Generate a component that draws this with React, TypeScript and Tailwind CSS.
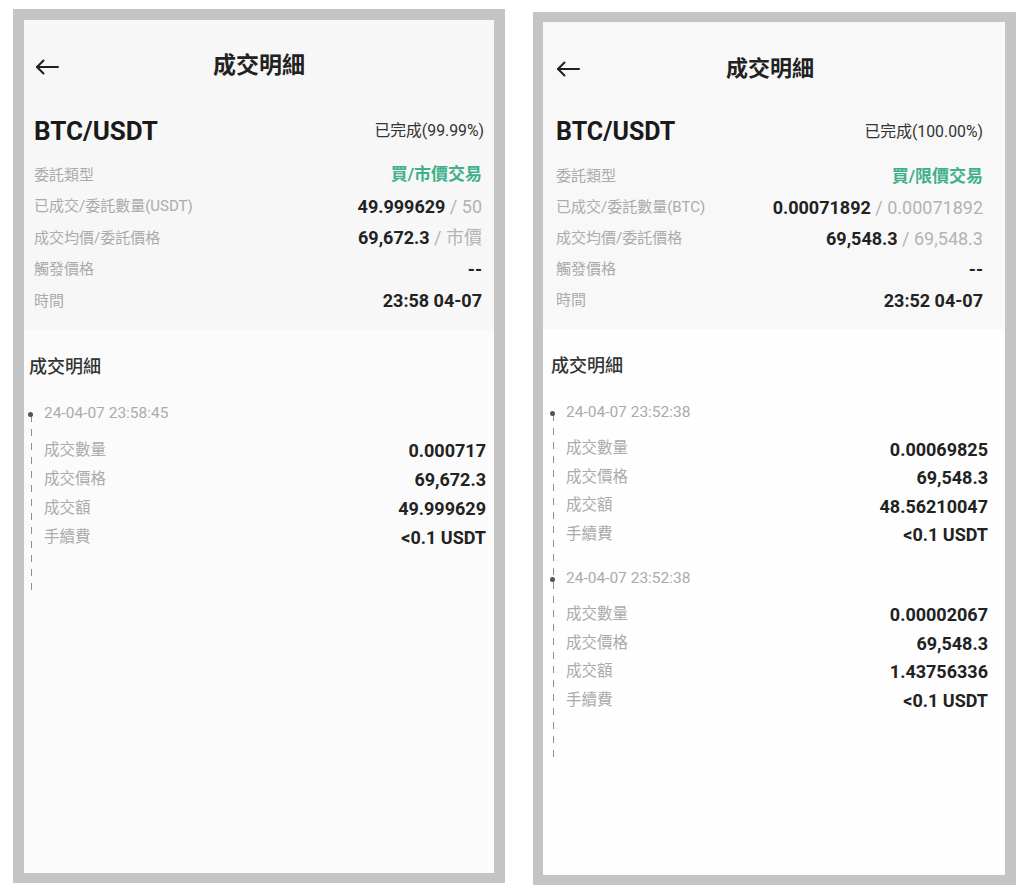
import React from "react";

type InfoRow = { label: string; main?: string; sub?: string; green?: boolean };
type Trade = { ts: string; rows: [string, string][] };

type PanelProps = {
  outer: string;
  inner: string;
  top: string;
  header: string;
  arrowPad: string;
  titleCls: string;
  pairRow: string;
  pairCls: string;
  status: string;
  infoWrap: string;
  infoRow: string;
  rows: InfoRow[];
  sectionCls: string;
  tlWrap: string;
  dotLeft: string;
  lineCls: string;
  tsRows: string[];
  detailFirst: string;
  detailRow: string;
  trades: Trade[];
};

function Arrow() {
  return (
    <svg width="24" height="16" viewBox="0 0 24 16" fill="none">
      <path d="M2 8H23" stroke="#1f1f1f" strokeWidth="2" strokeLinecap="round" />
      <path d="M8.5 1.5L2 8l6.5 6.5" stroke="#1f1f1f" strokeWidth="2" strokeLinecap="round" strokeLinejoin="round" />
    </svg>
  );
}

function Panel(p: PanelProps) {
  return (
    <div className={p.outer}>
      <div className={p.inner}>
        <div className={p.top}>
          <div className={p.header}>
            <div className={p.arrowPad}>
              <Arrow />
            </div>
            <div className={p.titleCls}>成交明細</div>
            <div />
          </div>
          <div className={p.pairRow}>
            <div className={p.pairCls}>BTC/USDT</div>
            <div className="text-[15.8px] text-[#333]">{p.status}</div>
          </div>
          <div className={p.infoWrap}>
            {p.rows.map((r) => (
              <div key={r.label} className={p.infoRow}>
                <div className="text-[15px] text-[#ababab]">{r.label}</div>
                {r.green ? (
                  <div className="text-[17px] font-bold text-[#3fb08a]">{r.main}</div>
                ) : (
                  <div className="text-[18px]">
                    <span className="font-bold text-[#222]">{r.main}</span>
                    {r.sub ? <span className="text-[#b3b3b3]"> / {r.sub}</span> : null}
                  </div>
                )}
              </div>
            ))}
          </div>
        </div>
        <div className={p.sectionCls}>成交明細</div>
        <div className={p.tlWrap}>
          <div className={p.lineCls} />
          {p.trades.map((t, i) => (
            <div key={i} className={p.tsRows[i]}>
              <div className="relative flex h-[22px] items-center text-[15.5px] text-[#ababab]">
                <span className={p.dotLeft} />
                {t.ts}
              </div>
              <div className={p.detailFirst}>
                {t.rows.map(([k, v]) => (
                  <div key={k} className={p.detailRow}>
                    <div className="text-[15.5px] text-[#ababab]">{k}</div>
                    <div className="text-[18px] font-bold text-[#222]">{v}</div>
                  </div>
                ))}
              </div>
            </div>
          ))}
        </div>
      </div>
    </div>
  );
}

export default function App() {
  return (
    <div className="flex h-[894px] w-[1024px] items-start overflow-hidden bg-white [font-family:Roboto,'Noto_Sans_CJK_TC',sans-serif]">
      <Panel
        outer="ml-[13px] mt-[9px] h-[874px] w-[492px] shrink-0 border-[11px] border-b-[10px] border-[#c4c4c4]"
        inner="flex h-full flex-col bg-[#fbfbfb]"
        top="bg-[#f7f7f7]"
        header="grid h-[92px] grid-cols-[1fr_auto_1fr] items-center"
        arrowPad="pl-[11px] pt-[1px]"
        titleCls="text-[23px] font-bold text-[#222]"
        pairRow="flex h-[38px] items-center justify-between pl-[10px] pr-[10px]"
        pairCls="text-[26px] font-bold text-[#1a1a1a]"
        status="已完成(99.99%)"
        infoWrap="mt-[9px] pb-[13px] pl-[10px] pr-[12px]"
        infoRow="flex h-[31.5px] items-center justify-between"
        rows={[
          { label: "委託類型", main: "買/市價交易", green: true },
          { label: "已成交/委託數量(USDT)", main: "49.999629", sub: "50" },
          { label: "成交均價/委託價格", main: "69,672.3", sub: "市價" },
          { label: "觸發價格", main: "--" },
          { label: "時間", main: "23:58 04-07" },
        ]}
        sectionCls="mt-[25px] flex h-[24px] items-center pl-[5px] text-[18px] font-medium text-[#333]"
        tlWrap="relative mt-[24px] pb-[40px] pl-[20px] pr-[8px]"
        dotLeft="absolute left-[-16px] top-[9px] h-[5px] w-[5px] rounded-full bg-[#555]"
        lineCls="absolute left-[6.5px] top-[12px] bottom-0 w-px bg-[repeating-linear-gradient(to_bottom,#8f8f8f_0_7px,transparent_7px_14px)]"
        tsRows={["", ""]}
        detailFirst="mt-[11.5px]"
        detailRow="flex h-[29px] items-center justify-between"
        trades={[
          {
            ts: "24-04-07 23:58:45",
            rows: [
              ["成交數量", "0.000717"],
              ["成交價格", "69,672.3"],
              ["成交額", "49.999629"],
              ["手續費", "<0.1 USDT"],
            ],
          },
        ]}
      />
      <Panel
        outer="ml-[28px] mt-[12px] h-[873px] w-[483px] shrink-0 border-[10px] border-r-[11px] border-[#c4c4c4]"
        inner="flex h-full flex-col bg-[#fefefe]"
        top="bg-[#f8f8f8]"
        header="grid h-[92px] grid-cols-[1fr_auto_1fr] items-center"
        arrowPad="pl-[13px] pt-[1px]"
        titleCls="mr-[8px] text-[22px] font-bold text-[#222]"
        pairRow="flex h-[36px] items-center justify-between pl-[13px] pr-[22px]"
        pairCls="text-[25px] font-bold text-[#1a1a1a]"
        status="已完成(100.00%)"
        infoWrap="mt-[11px] pb-[13px] pl-[13px] pr-[22px]"
        infoRow="flex h-[31px] items-center justify-between"
        rows={[
          { label: "委託類型", main: "買/限價交易", green: true },
          { label: "已成交/委託數量(BTC)", main: "0.00071892", sub: "0.00071892" },
          { label: "成交均價/委託價格", main: "69,548.3", sub: "69,548.3" },
          { label: "觸發價格", main: "--" },
          { label: "時間", main: "23:52 04-07" },
        ]}
        sectionCls="mt-[24px] flex h-[24px] items-center pl-[8px] text-[18px] font-medium text-[#333]"
        tlWrap="relative mt-[25px] pb-[42px] pl-[23px] pr-[17px]"
        dotLeft="absolute left-[-16px] top-[9px] h-[5px] w-[5px] rounded-full bg-[#555]"
        lineCls="absolute left-[9.5px] top-[12px] bottom-0 w-px bg-[repeating-linear-gradient(to_bottom,#8f8f8f_0_7px,transparent_7px_14px)]"
        tsRows={["", "mt-[19px]"]}
        detailFirst="mt-[10.75px]"
        detailRow="flex h-[28.5px] items-center justify-between"
        trades={[
          {
            ts: "24-04-07 23:52:38",
            rows: [
              ["成交數量", "0.00069825"],
              ["成交價格", "69,548.3"],
              ["成交額", "48.56210047"],
              ["手續費", "<0.1 USDT"],
            ],
          },
          {
            ts: "24-04-07 23:52:38",
            rows: [
              ["成交數量", "0.00002067"],
              ["成交價格", "69,548.3"],
              ["成交額", "1.43756336"],
              ["手續費", "<0.1 USDT"],
            ],
          },
        ]}
      />
    </div>
  );
}
